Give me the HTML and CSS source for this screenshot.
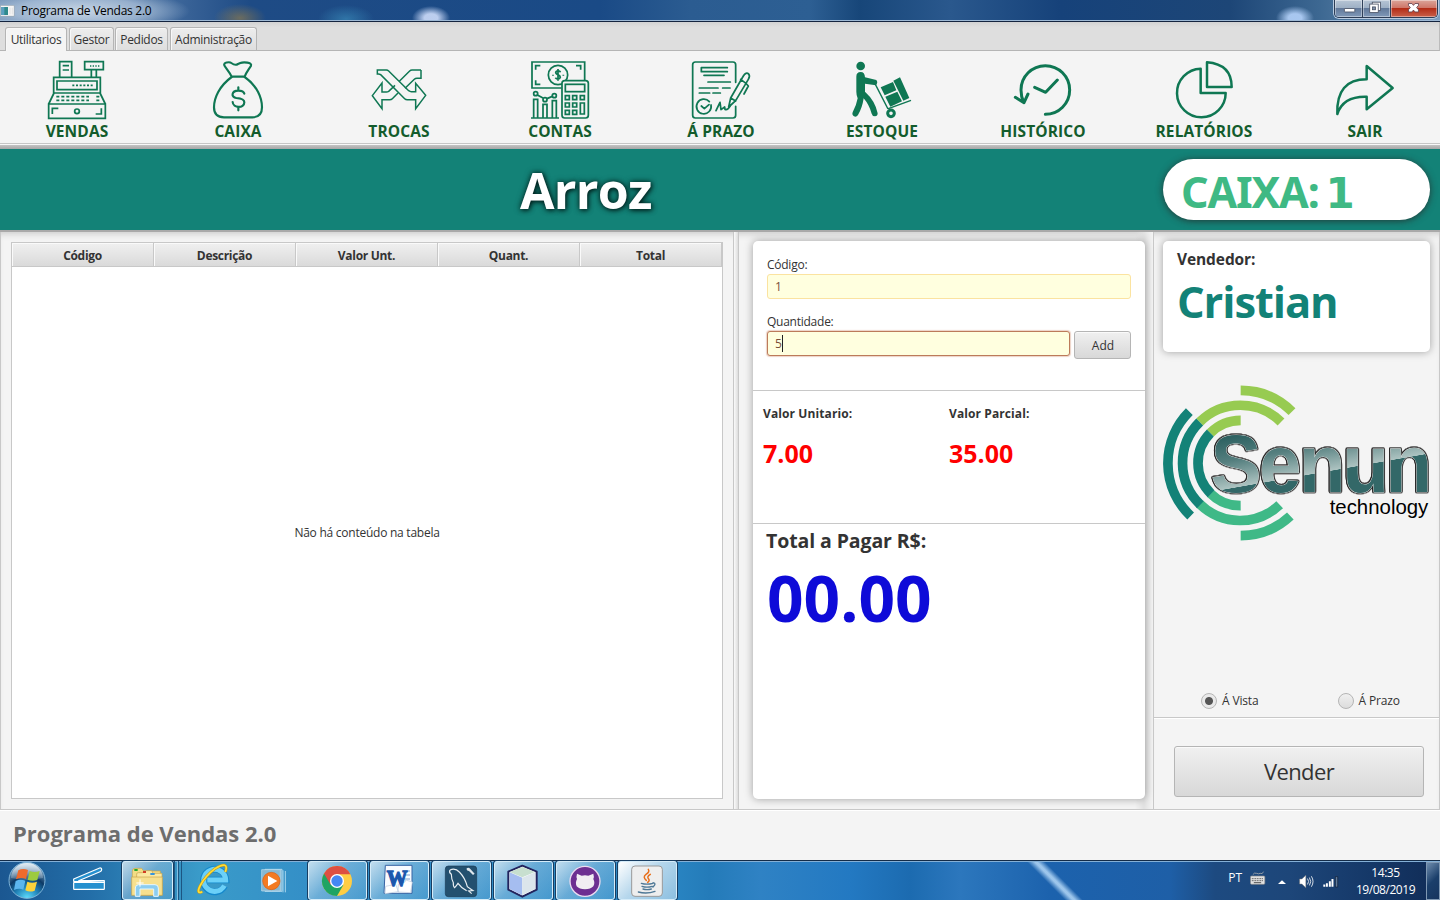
FILE: index.html
```html
<!DOCTYPE html>
<html lang="pt-BR">
<head>
<meta charset="utf-8">
<title>Programa de Vendas 2.0</title>
<link rel="stylesheet" href="styles.css">
</head>
<body>
<header class="titlebar">
  <svg class="app-icon" viewBox="0 0 45 36"><rect x="1" y="1" width="42" height="33" rx="2" fill="#f5f5f5" stroke="#8a98a8" stroke-width="2"/><rect x="4" y="6" width="20" height="24" fill="#2f8a8c"/><rect x="4" y="6" width="9" height="24" fill="#5c9fc0"/><path d="M30 8v20M37 8v20" stroke="#e2e2e2" stroke-width="3"/></svg>
  <span class="title-text">Programa de Vendas 2.0</span>
  <div class="window-buttons">
    <div class="wb"><svg viewBox="0 0 84 54"><rect x="29" y="27" width="33" height="11" rx="2" fill="#fff" stroke="#454d60" stroke-width="2.5"/></svg></div>
    <div class="wb"><svg viewBox="0 0 81 54"><rect x="27" y="7" width="26" height="26" fill="#fff" stroke="#454d60" stroke-width="2.5"/><rect x="19" y="13" width="27" height="27" fill="#fff" stroke="#454d60" stroke-width="2.5"/><rect x="28" y="22" width="9" height="9" fill="#7f92ab" stroke="#454d60" stroke-width="2.5"/></svg></div>
    <div class="wb wb-close"><svg viewBox="0 0 141 54"><path d="M56 11h11l5 6 5-6h11v6l-6 7 6 7v7H77l-5-6-5 6H56v-7l6-7-6-7z" fill="#fff" stroke="#5a3a48" stroke-width="2.5"/></svg></div>
  </div>
</header>
<nav class="tabs">
  <div class="tab active">Utilitarios</div>
  <div class="tab t2">Gestor</div>
  <div class="tab t3">Pedidos</div>
  <div class="tab t4">Administração</div>
</nav>
<section class="toolbar">
  <div class="tool">
    <svg viewBox="135 180 192 180"><g class="ln"><path d="M179 231V185h36v46M188 197h19M188 210h19M254 185h56v24h-56zM274 209v22M289 209v22M161 232h140v47H161zM171 243h120v26H171zM162 279l-16 33M300 279l16 33M146 312h170v43H146z"/><path stroke-dasharray="4 4" d="M270 198h28"/><path stroke-dasharray="6 5" d="M217 256h66"/><path stroke-dasharray="9 6" d="M169 290h98M169 301h98M289 290h9M289 301h9"/><path d="M157 342v-17h18M287 342h17v-17"/><circle cx="231" cy="334" r="7"/></g></svg>
    <span>VENDAS</span></div>
  <div class="tool">
    <svg viewBox="618 180 192 180"><g class="ln rd" stroke-width="6"><path d="M695 230C688 215 676 203 673 196c-4-9 16-11 21-7 8 6 14 7 20 3l7-3c9-4 36-2 32 8-4 8-14 19-19 33z"/><path d="M695 231c-37 27-53 63-53 91 0 20 11 30 30 30h85c19 0 29-10 29-30 0-28-14-64-52-91"/><path d="M733 281c-2-7-8-9-18-9-21 0-23 20-6 22 14 1 24 3 24 13 0 19-34 18-35-1M715 262v10M715 321v10"/></g></svg>
    <span>CAIXA</span></div>
  <div class="tool">
    <svg viewBox="1101 180 192 180"><g class="ln" stroke-width="4"><path d="M1132 210h27q4 0 7 3l60 59q4 3 8 3h13v-25l30 36-30 40v-27h-25q-5 0-8-3l-72-72q-3-2-7-2h-3z"/><path d="M1263 210h-27q-4 0-7 3l-31 31M1263 210v25h-12q-5 0-8 3l-28 27M1185 256l-19 18q-3 2-7 2h-13v-27l-29 38 29 39v-27h23q5 0 8-3l17-17"/></g></svg>
    <span>TROCAS</span></div>
  <div class="tool">
    <svg viewBox="144 180 192 180"><g class="ln"><path d="M245 264h-89V186h158v55M167 209v-12h14M167 241v12h14M288 197h14v12"/><circle cx="234" cy="225" r="29"/><path d="M242 216q-8-6-14-1c-5 8 14 9 13 17-2 7-11 6-15 1M234 207v35"/><path d="M219 224v3M250 224v3"/><rect class="fillbg" x="246" y="242" width="79" height="112" rx="8"/><rect x="256" y="253" width="58" height="22"/><path d="M256 287h12v12h-12zM278 287h12v12h-12zM301 287h12v12h-12zM256 309h12v12h-12zM278 309h12v12h-12zM301 309h12v33h-12zM256 331h12v12h-12zM278 331h12v12h-12z"/><path d="M153 354h84M161 354v-56h12v56M189 354v-41h12v41M217 354v-52h12v52M172 285l17 9M201 296l16-7"/><circle cx="167" cy="281" r="6"/><circle cx="195" cy="299" r="6"/><circle cx="223" cy="287" r="6"/></g></svg>
    <span>CONTAS</span></div>
  <div class="tool">
    <svg viewBox="627 180 192 180"><g class="ln rd"><path d="M767 247v-53q0-8-8-8H646q-8 0-8 8v152q0 8 8 8h113q8 0 8-8v-27"/><path d="M742 203h-78v12h78M672 226h60M684 246h67M658 264h56M728 264h22M658 279h31M699 279h22"/><path d="M688 305a22 22 0 1 0 5 10M664 318l9 8 14-12"/><path d="M708 332l12-25 3 22 11-8 1 7q8 3 15-9"/><path d="M746 321l6-27 38-66q8-13 16-6 5 6-1 16l-38 64zM752 294l15 9M782 238l16 12M797 249l8 9-13 24"/></g></svg>
    <span>Á PRAZO</span></div>
  <div class="tool">
    <svg viewBox="1110 180 192 180"><g fill="#0f7753"><circle cx="1142" cy="198" r="13"/><path d="M1129 230q0-14 13-14 12 0 13 16l34 8q6 7-1 16l-33-5v24q31 28 38 65 0 9-8 9-8 0-10-8-7-26-24-46-4 28-17 50-5 7-12 4-7-4-4-12 11-20 15-42-4-10-4-20z"/><path d="M1202 262l37-16 10 25-35 15zM1216 290l36-15 14 29-35 16zM1240 242l20-10 28 62-18 8z"/></g><g class="ln"><path stroke-width="4" d="M1184 249l40 78M1225 326l68-25"/><circle cx="1233" cy="340" r="10" stroke-width="9"/></g></svg>
    <span>ESTOQUE</span></div>
  <div class="tool">
    <svg viewBox="153 180 192 180"><g class="ln rd" stroke-width="9"><path d="M256 343a73 73 0 1 0-73-73q0 20 8 37M166 292l26 16 12-26M224 262l33 15 35-37"/></g></svg>
    <span>HISTÓRICO</span></div>
  <div class="tool">
    <svg viewBox="636 180 192 180"><g class="ln" stroke-width="7"><path d="M722 206a73 73 0 1 0 75 73h-75z"/><path d="M741 187v74h74q0-68-74-74z"/></g></svg>
    <span>RELATÓRIOS</span></div>
  <div class="tool">
    <svg viewBox="1119 180 192 180"><path class="ln" stroke-width="7" d="M1220 198v40q-92 0-88 104 17-54 88-52v38l78-64z"/></svg>
    <span>SAIR</span></div>
</section>
<section class="banner">
  <h1>Arroz</h1>
  <div class="caixa-pill">CAIXA: <span class="num">1</span></div>
</section>
<main class="content">
  <section class="left-pane">
    <div class="table">
      <div class="thead"><div>Código</div><div>Descrição</div><div>Valor Unt.</div><div>Quant.</div><div>Total</div></div>
      <div class="tbody">Não há conteúdo na tabela</div>
    </div>
  </section>
  <div class="divider"></div>
  <section class="mid-pane">
    <div class="card order">
      <div class="entry">
        <label>Código:</label>
        <div class="field">1</div>
        <label class="second">Quantidade:</label>
        <div class="row"><div class="field focused">5<i class="caret"></i></div><div class="btn add">Add</div></div>
      </div>
      <div class="values">
        <div><b>Valor Unitario:</b><strong>7.00</strong></div>
        <div><b>Valor Parcial:</b><strong>35.00</strong></div>
      </div>
      <div class="total"><b>Total a Pagar R$:</b><strong>00.00</strong></div>
    </div>
  </section>
  <aside class="right-pane">
    <div class="upper">
      <div class="card seller"><b>Vendedor:</b><strong>Cristian</strong></div>
      <svg class="logo" viewBox="36 25 807 480">
        <defs>
          <linearGradient id="gloss" x1="509" y1="139" x2="551" y2="396" gradientUnits="userSpaceOnUse"><stop offset="0" stop-color="#2a5f5f"/><stop offset=".3" stop-color="#557f7f"/><stop offset=".61" stop-color="#adc3c1"/><stop offset=".615" stop-color="#336868"/><stop offset="1" stop-color="#336868"/></linearGradient>
        </defs>
        <g fill="none" stroke-width="29">
          <g stroke="#97cb51"><path d="M272 47a218 218 0 0 1 154 64"/><path d="M149 142a173 173 0 0 1 244 0"/><path d="M181 175a128 128 0 0 1 91-38"/></g>
          <g stroke="#3fb987"><path d="M272 483a218 218 0 0 0 149-59"/><path d="M149 388a173 173 0 0 0 240 2"/><path d="M181 356a128 128 0 0 0 91 37"/></g>
          <g stroke="#138277"><path d="M118 111a218 218 0 0 0 4 313"/><path d="M149 142a173 173 0 0 0 2 248"/><path d="M181 175a128 128 0 0 0 2 182"/></g>
        </g>
        <text class="brand" transform="scale(.93 1)" y="353" x="196 352 481 621 760" fill="url(#gloss)">Senun</text>
        <text class="tech" x="539" y="417" textLength="296" lengthAdjust="spacingAndGlyphs">technology</text>
      </svg>
      <div class="radios">
        <div class="radio"><i class="dot on"></i>Á Vista</div>
        <div class="radio"><i class="dot"></i>Á Prazo</div>
      </div>
    </div>
    <div class="lower"><div class="btn sell">Vender</div></div>
  </aside>
</main>
<footer class="footer">Programa de Vendas 2.0</footer>
<section class="taskbar">
  <svg class="w54" viewBox="0 180 162 120">
    <defs>
      <radialGradient id="orb" cx=".5" cy="1" r="1"><stop offset="0" stop-color="#5fe0ff"/><stop offset=".35" stop-color="#1f7fb5"/><stop offset=".6" stop-color="#0d3a66"/><stop offset="1" stop-color="#9dc3df"/></radialGradient>
      <linearGradient id="gl" x1="0" y1="0" x2="0" y2="1"><stop offset="0" stop-color="#fff" stop-opacity=".75"/><stop offset="1" stop-color="#fff" stop-opacity=".15"/></linearGradient>
    </defs>
    <circle cx="81" cy="241" r="54" fill="url(#orb)" stroke="#7fb4d8" stroke-width="3"/>
    <path d="M33 234a48 45 0 0 1 96 0q-48 12-96 0z" fill="url(#gl)"/>
    <path d="M55 211q14-7 29-1l-6 27q-15-6-30 1z" fill="#ee6a2c"/><path d="M89 213q14 6 30 0l-7 27q-15 5-29-1z" fill="#9ccb3e"/>
    <path d="M47 243q14-7 29-1l-6 27q-13-6-28 1z" fill="#5cb6ef"/><path d="M82 245q14 6 29 0l-7 27q-15 6-28-1z" fill="#fcd33b"/>
  </svg>
  <svg class="w68" viewBox="162 180 204 120"><g fill="#2590cf" stroke="#fff" stroke-width="3.5" stroke-linejoin="round"><rect x="221" y="247" width="92" height="21" rx="2"/><path d="M221 244v-7l78-33q6-1 6 5 0 4-5 6l-64 27h77v5z"/></g></svg>
  <div class="task explorer"><svg viewBox="366 180 153 120"><g stroke="#c7a44b" stroke-width="2"><path d="M397 280v-70q0-8 8-8h20l6 8h50v70z" fill="#f3dc84"/><path d="M410 282v-63q0-4 5-4h13l5-6h22l4 8h27v65z" fill="#fbe8a0"/><path d="M395 283v-55h92v55z" fill="#f7e08e"/></g><path d="M403 207h10" stroke="#27a82d" stroke-width="6"/><path d="M429 213h9" stroke="#d33c23" stroke-width="6"/><path d="M451 219h13" stroke="#3795dc" stroke-width="6"/><path d="M406 286v-25q0-10 10-10h49q10 0 10 10v25h-14v-22h-41v22z" fill="#8ccdf0" stroke="#e4f6ff" stroke-width="3"/><path d="M420 235v22M409 246h22" stroke="#fff" stroke-width="3"/></svg></div>
  <div class="stack"><i></i><i></i><i></i></div>
  <svg class="w62" viewBox="546 180 186 120"><path d="M674 258a34 34 0 1 1 4-18H622" fill="none" stroke="#1588cc" stroke-width="20"/><path d="M673 257a33 33 0 1 1 4-17H622" fill="none" stroke="#6bd0f8" stroke-width="15"/><path d="M607 275c-28 14-2-39 38-69 27-17 40-14 31 10" fill="none" stroke="#c89916" stroke-width="8"/><path d="M607 275c-28 14-2-39 38-69 27-17 40-14 31 10" fill="none" stroke="#ffde36" stroke-width="5"/></svg>
  <svg class="w64" viewBox="732 180 192 120"><path d="M795 208h51v66h-51zM849 211v66M856 213v64" fill="#6ba8cb" stroke="#a7d5ed" stroke-width="3"/><path d="M785 209h56v64h-56z" fill="#86b8d3" stroke="#c6e1ee" stroke-width="2"/><circle cx="814" cy="243" r="26" fill="#f37a22" stroke="#d95f12" stroke-width="2"/><path d="M804 227l28 16-28 16z" fill="#fff"/></svg>
  <div class="task"><svg viewBox="924 180 177 120"><circle cx="1011" cy="240" r="45" fill="#ffcd43"/><path d="M972 217.500A45 45 0 0 0 1011 285L1030 252 1011 240z" fill="#1fa463"/><path d="M972 217.500A45 45 0 0 1 1051 220H1011L992 251z" fill="#dd4f42"/><circle cx="1011" cy="240" r="21" fill="#fff"/><circle cx="1011" cy="240" r="17" fill="#4587f3"/></svg></div>
  <div class="task"><svg viewBox="60 15 177 120"><path d="M106 28h80v84h-84z" fill="#f8fbff" stroke="#3864a4" stroke-width="3"/><path d="M158 45h22M162 57h18M164 69h16" stroke="#7c9fd0" stroke-width="3"/><path d="M107 91l30-6 8 22-40 6zM145 85l20-7 2-6 20 6-5 32-38-2z" fill="#fff" stroke="#b9c8dc" stroke-width="2"/><text class="word" x="110" y="89" textLength="62" lengthAdjust="spacingAndGlyphs">W</text></svg></div>
  <div class="task"><svg viewBox="246 15 177 120"><rect x="286" y="30" width="94" height="92" rx="9" fill="#23506f" stroke="#183a55" stroke-width="2"/><path d="M300 42q16-7 28 6 17 17 24 44l17 12-13 1 9 8M300 42q-4 7 4 13 0 14 6 25-1 12 4 15 6-7 10-13 8 12 26 22" fill="none" stroke="#e8eef3" stroke-width="3.500"/><path d="M350 37q6-4 11 2l13 14-5 4-12-12q-8 0-7-8z" fill="#dfe7ed"/></svg></div>
  <div class="task"><svg viewBox="432 15 177 120"><path d="M517 29l43 18v54l-43 21-42-21V47z" fill="#fff" stroke="#22235d" stroke-width="6" stroke-linejoin="round"/><path d="M517 33l38 15-38 16-38-16z" fill="#c7dfcf"/><path d="M479 49l38 16v53l-38-19z" fill="#a5bdf0"/><path d="M555 49l-38 16v53l38-19z" fill="#dbe5eb"/></svg></div>
  <div class="task"><svg viewBox="618 15 177 120"><circle cx="705" cy="76" r="45" fill="#6d2f91" stroke="#eadcf0" stroke-width="4"/><path d="M681 53l14 6q10-2 20 0l15-6q3 9 0 16 6 12 0 22-8 9-25 9t-25-9q-5-10 1-22-3-7 0-16z" fill="#f1edf2"/></svg></div>
  <div class="task current"><svg viewBox="804 15 177 120"><rect x="845" y="30" width="92" height="91" rx="10" fill="#eee" stroke="#999" stroke-width="3"/><g fill="none" stroke-width="4.500" stroke-linecap="round"><path d="M895 40q5 8-7 15-11 8 1 18M901 55q-12 7-5 14 4 5-3 10" stroke="#e86f1b"/><path d="M874 82q16 5 35 0M876 91q14 5 31 0M879 99q12 4 25 0M865 108q25 7 50-2M909 80q12 2 0 13" stroke="#4e7896" stroke-width="4"/></g></svg></div>
  <div class="tray">
    <span class="lang">PT</span>
    <svg class="kbd" viewBox="506 570 50 48"><path d="M517 584q4-7 11-4t11 0q7 4 10-5" fill="none" stroke="#a5a9ad" stroke-width="2.500"/><rect x="510" y="588" width="43" height="25" rx="3" fill="#e0e0e0" stroke="#888" stroke-width="2"/><path d="M514 596h35M514 602h35" stroke="#555" stroke-width="3" stroke-dasharray="3 2"/><path d="M520 608h22" stroke="#555" stroke-width="3"/></svg>
    <svg class="up" viewBox="590 590 30 24"><path d="M593 608l12-11 12 11z" fill="#fff"/></svg>
    <svg class="vol" viewBox="652 580 52 46"><path d="M657 595h7l12-11v38l-12-11h-7z" fill="#fff" stroke="#777" stroke-width="1.500"/><path d="M681 594q7 9 0 18M687 591q8 12 0 24M693 587q10 16 0 32" fill="none" stroke="#fff" stroke-width="2.500"/></svg>
    <svg class="net" viewBox="724 580 52 44"><path d="M731 611v7M739 607v11M748 601v17M756 594v24" stroke="#fff" stroke-width="6"/><path d="M765 587h7v32h-7z" fill="#617b9b" stroke="#101d33" stroke-width="2"/></svg>
    <div class="clock"><span>14:35</span><span>19/08/2019</span></div>
    <div class="peek"></div>
  </div>
</section>
</body>
</html>
```

FILE: styles.css
```css
* { box-sizing: border-box; }
body {
  margin: 0; width: 1440px; height: 900px; overflow: hidden;
  display: flex; flex-direction: column;
  background: #f4f4f4; color: #333;
  font: 12px/16px "Open Sans", "Noto Sans", sans-serif;
  letter-spacing: -0.25px;
}
svg { display: block; }

.titlebar {
  height: 22px; flex: none; display: flex; align-items: flex-start; overflow: hidden;
  border-bottom: 1px solid #14243f;
  box-shadow: inset 0 -1px 0 #9db8d4;
  background:
    radial-gradient(ellipse 110px 22px at 80px 11px, rgba(205,218,232,.95), rgba(180,200,222,.7) 60%, transparent),
    radial-gradient(ellipse 26px 14px at 240px 18px, rgba(125,115,85,.8), transparent),
    radial-gradient(ellipse 28px 14px at 346px 19px, rgba(60,145,190,.6), transparent),
    radial-gradient(ellipse 19px 12px at 431px 18px, rgba(205,220,250,.9) 35%, transparent),
    radial-gradient(ellipse 19px 12px at 1295px 18px, rgba(180,210,250,.9) 35%, transparent),
    linear-gradient(90deg, #6f8fb5 0, #3f689b 170px, #1e4b85 250px, #1a4a86 600px, #2b5c91 690px, #2d5f93 810px, #174679 860px, #2a588d 950px, #16427a 1060px, #1d4677 1230px, #3d6892 1320px, #7d9fc0 1440px);
}
.app-icon { width: 15px; height: 12px; margin-top: 5px; }
.title-text { color: #000; margin: 3px 0 0 6px; letter-spacing: -0.28px; }
.window-buttons { margin-left: auto; margin-right: 2px; display: flex; height: 18px; border: 1px solid #2c3c55; border-top: 0; border-radius: 0 0 5px 5px; overflow: hidden; box-shadow: 0 0 0 1px #b9cbe0; }
.wb { width: 28px; border-right: 1px solid #2f4059; box-shadow: inset 0 0 0 1px rgba(255,255,255,.4); background: linear-gradient(#b7c5d5 0, #9eb0c5 45%, #62799a 50%, #8099b8); }
.wb svg { width: 27px; height: 17px; }
.wb-close { width: 46px; border-right: 0; background: linear-gradient(#dba59a 0, #cf7769 45%, #b32d17 50%, #c9604a); }
.wb-close svg { width: 44px; }

.tabs { height: 29px; flex: none; padding: 5px 0 0 5px; display: flex; gap: 2px; background: linear-gradient(#d2d2d2, #dedede 5px); border-bottom: 1px solid #b5b5b5; border-right: 1px solid #bbb; }
.tab { height: 23px; padding-top: 4px; text-align: center; border: 1px solid #b5b5b5; border-bottom: 0; border-radius: 3px 3px 0 0; background: linear-gradient(#ededed, #dedede); box-shadow: inset 1px 1px 0 #f8f8f8; width: 45px; white-space: nowrap; letter-spacing: -0.3px; }
.tab.active { width: 62px; height: 24px; background: #f4f4f4; }
.tab.t3 { width: 53px; margin-left: -1px; }
.tab.t4 { width: 87px; }

.toolbar { height: 98px; flex: none; display: flex; margin-left: -3.5px; padding-top: 9px; background: linear-gradient(#f4f4f4 0 92px, #c6c6c6 92px 93px, #f8f8f8 93px 94px, #c4c4c4 94px, #a6a6a6 98px); }
.tool { width: 161px; flex: none; display: flex; flex-direction: column; align-items: center; font-weight: 700; font-size: 15.500px; line-height: 22px; color: #135c2c; letter-spacing: 0.1px; }
.tool svg { width: 64px; height: 60px; }
.ln { fill: none; stroke: #0f7753; stroke-width: 5.2; }
.ln[stroke-width="4"], .ln [stroke-width="4"] { stroke-width: 4.5; }
.ln[stroke-width="6"] { stroke-width: 6.5; }
.ln[stroke-width="7"] { stroke-width: 7.500; stroke-linejoin: round; }
.ln[stroke-width="9"], .ln [stroke-width="9"] { stroke-width: 9; }
.rd { stroke-linecap: round; stroke-linejoin: round; }
.fillbg { fill: #f4f4f4; }

.banner { height: 83px; flex: none; display: flex; align-items: center; justify-content: space-between; padding: 0 10px 0 520px; background: #138277; border-bottom: 2px solid #a9a9a9; }
.banner h1 { margin: 0; color: #fff; font-size: 50px; line-height: 60px; letter-spacing: -0.7px; text-shadow: 1px 1px 5px #001b18, 0 0 6px #063c36; }
.caixa-pill { width: 267px; height: 61px; margin-top: -1px; border-radius: 31px; background: #fff; color: #3fb984; padding-left: 18px; font: 700 43px/66px "Noto Sans", sans-serif; letter-spacing: -1.2px; box-shadow: 0 1px 7px rgba(40,40,40,.8); white-space: nowrap; }
.num { font-family: "DejaVu Sans", sans-serif; font-size: 42px; margin-left: -3px; }

.content { height: 578px; flex: none; display: flex; border: 1px solid #c8c8c8; border-top: 0; box-shadow: inset 0 6px 6px -4px #ccc; }
.left-pane { width: 732px; flex: none; padding: 10px; }
.table { height: 557px; border: 1px solid #c8c8c8; background: #fff; }
.thead { height: 24px; display: flex; border-bottom: 1px solid #c8c8c8; background: linear-gradient(#f0f0f0, #dadada); }
.thead div { width: 142px; border-right: 1px solid #c8c8c8; text-align: center; font-weight: 700; line-height: 25px; letter-spacing: -0.3px; box-shadow: inset 1px 1px 0 #fafafa; }
.tbody { height: 532px; display: flex; align-items: center; justify-content: center; }
.divider { width: 6px; flex: none; border: solid #c8c8c8; border-width: 0 1px; background: linear-gradient(90deg, #fafafa, #ddd); }
.mid-pane { width: 414px; flex: none; padding: 9px 8px 9px 14px; background: linear-gradient(90deg, transparent 396px, #e2e2e2 405px, #f4f4f4); }
.card { background: #fff; border-radius: 5px; box-shadow: 0 0 8px rgba(0,0,0,.35); }
.order { height: 558px; }
.entry { height: 150px; padding: 15px 14px 0; border-bottom: 1px solid #c8c8c8; }
.entry label { display: block; height: 18px; line-height: 17px; }
.entry .second { margin-top: 14px; }
.field { height: 25px; border: 1px solid #fbe3a0; border-radius: 3px; background: #ffffdf; color: #7a4f3a; padding-left: 7px; line-height: 24px; }
.row { display: flex; gap: 4px; }
.field.focused { width: 303px; border-color: #bc7b5a; box-shadow: 0 0 1px 1px rgba(200,130,95,.35); display: flex; align-items: center; height: 25px; }
.caret { width: 1px; height: 17px; background: #222; }
.btn { width: 57px; height: 28px; border: 1px solid #b5b5b5; border-radius: 3px; background: linear-gradient(#f0f0f0, #d8d8d8); box-shadow: inset 0 1px 0 #fafafa; display: flex; align-items: center; justify-content: center; letter-spacing: 0; }
.add { padding: 2px 0 0 1px; }
.values { height: 133px; display: flex; padding: 15px 0 0 10px; border-bottom: 1px solid #c8c8c8; }
.values div { width: 186px; display: flex; flex-direction: column; gap: 13px; }
.values b { letter-spacing: 0.1px; }
.values strong { font-size: 25px; line-height: 36px; color: #f00; letter-spacing: 0; }
.total { padding: 4px 0 0 13px; display: flex; flex-direction: column; }
.total b { font-size: 19.500px; line-height: 26px; letter-spacing: -0.1px; }
.total strong { font-size: 64px; line-height: 88px; color: #0e0bd8; letter-spacing: 0; margin-left: 1px; }
.right-pane { width: 286px; flex: none; border-left: 1px solid #c8c8c8; display: flex; flex-direction: column; }
.upper { height: 486px; padding: 9px 9px 0 9px; border-bottom: 1px solid #c8c8c8; box-shadow: 0 1px 0 #fff; display: flex; flex-direction: column; }
.seller { width: 267px; height: 111px; padding: 7px 0 0 14px; display: flex; flex-direction: column; }
.seller b { font-size: 15.500px; line-height: 22px; letter-spacing: -0.1px; }
.seller strong { font-size: 43.500px; line-height: 64px; color: #138277; letter-spacing: -1.1px; }
.logo { width: 269px; height: 160px; margin: 31px 0 0 -1px; flex: none; overflow: visible; }
.brand {
  font: 700 245px "Liberation Sans", Arial, sans-serif; letter-spacing: 0;
  stroke: #dedede; stroke-width: 3; stroke-linejoin: round; paint-order: stroke;
  filter: drop-shadow(1.5px 0 0 #222) drop-shadow(-1.5px 0 0 #222) drop-shadow(0 1.5px 0 #222) drop-shadow(0 -1.5px 0 #222);
}
.tech { font: 62px "Liberation Sans", Arial, sans-serif; fill: #000; letter-spacing: 0; }
.word { font: 700 68px "Liberation Serif", serif; fill: #1c57ad; stroke: #1c57ad; stroke-width: 4; }
.radios { display: flex; gap: 79px; margin: 150px 0 0 38px; }
.radio { display: flex; align-items: center; gap: 5px; height: 16px; white-space: nowrap; letter-spacing: -0.15px; }
.dot { width: 16px; height: 16px; border-radius: 50%; border: 1px solid #b5b5b5; background: linear-gradient(#f0f0f0, #dcdcdc); }
.dot.on { background: radial-gradient(circle, #555 0 3.500px, #e9e9e9 4.500px); }
.lower { padding: 28px 0 0 20px; }
.sell { width: 250px; height: 51px; font-size: 22px; letter-spacing: -0.6px; padding-bottom: 2px; }
.footer { height: 50px; flex: none; border-top: 1px solid #fff; padding-left: 13px; font-size: 22px; font-weight: 700; line-height: 45px; color: #6d6d6d; letter-spacing: 0; }

.taskbar { height: 40px; flex: none; display: flex; border-top: 1px solid #142c48; box-shadow: inset 0 1px 0 #84b0d7;
  background:
    linear-gradient(45deg, transparent 43%, rgba(170,208,242,.9) 49% 51%, transparent 57%) 1010px 0 / 90px 40px no-repeat,
    linear-gradient(90deg, #1b5791, #236ea8 90px, #3a9bc9 200px, #348fc7 310px, #2b88c5 660px, #247bb9 710px, #2f82c4 760px, #2379c2 850px, #1c6bb0 910px, #2c77bd 960px, #1c62ad 1050px, #1e5fa7 1170px, #1d4a80 1215px, #1d4679 1290px, #153868 1370px, #112c56); }
.taskbar svg { height: 40px; margin-top: -1px; flex: none; }
.w54 { width: 54px; } .w68 { width: 68px; } .w62 { width: 62px; } .w64 { width: 64px; }
.task { width: 59px; height: 39px; margin-right: 3px; flex: none; border: 1px solid #d5ecf9; border-radius: 3px; box-shadow: 0 0 0 1px #173d62; background: linear-gradient(135deg, rgba(255,255,255,.7), rgba(190,220,240,.4) 45%, rgba(140,195,230,.25)); }
.taskbar .task svg { width: 59px; margin: -1px; }
.task.explorer { width: 51px; margin-right: 0; }
.taskbar .explorer svg { width: 51px; }
.current { background: linear-gradient(135deg, #fff, #b6d7ec 45%, #8cbfe0); }
.stack { width: 9px; display: flex; gap: 2px; padding-left: 1px; }
.stack i { width: 2px; border-right: 1px solid #1c5582; background: #83bfe2; }
.tray { margin-left: auto; display: flex; align-items: center; color: #fff; }
.lang { margin: -6px 7px 0 0; letter-spacing: 0; }
.taskbar .kbd { width: 17px; height: 16px; margin: -6px 11px 0 0; }
.taskbar .up { width: 10px; height: 8px; margin: 3px 11px 0 0; }
.taskbar .vol { width: 17px; height: 15px; margin: 2px 7px 0 0; }
.taskbar .net { width: 17px; height: 15px; margin: 1px 16px 0 0; }
.clock { width: 61px; display: flex; flex-direction: column; align-items: center; line-height: 17px; letter-spacing: -0.45px; margin-right: 10px; }
.peek { width: 14px; height: 38px; border: 1px solid #7f98b3; background: linear-gradient(135deg, #6e8cad, #1b3f6b 50%, #16345e); }
```
